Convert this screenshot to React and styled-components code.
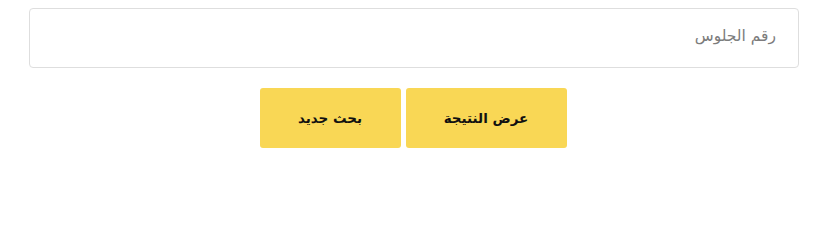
import React from "react";
import styled, { createGlobalStyle } from "styled-components";

const Global = createGlobalStyle`
  html, body { margin: 0; padding: 0; background: #fff; }
  body { font-family: "DejaVu Sans", "Noto Sans", sans-serif; }
  * { box-sizing: border-box; }
`;

const Wrapper = styled.div`
  direction: rtl;
  padding: 8px 14px 0 29px;
  display: flex;
  flex-direction: column;
  gap: 20px;
`;

const Input = styled.input`
  width: 100%;
  height: 60px;
  border: 1px solid #dedede;
  border-radius: 4px;
  padding: 0 22px 4px;
  font-family: "DejaVu Sans", sans-serif;
  font-size: 15.5px;
  color: #333;
  direction: rtl;
  outline: none;
  &::placeholder { color: #7c7c7c; }
`;

const Actions = styled.div`
  display: flex;
  justify-content: center;
  gap: 5px;
  padding-right: 2px;
`;

const Button = styled.button`
  width: ${(p) => p.$w}px;
  height: 60px;
  background: #f9d755;
  border: none;
  border-radius: 3px;
  font-family: "DejaVu Sans", sans-serif;
  font-weight: bold;
  font-size: 13.5px;
  color: #111;
  cursor: pointer;
`;

export default function App() {
  return (
    <>
      <Global />
      <Wrapper>
        <Input placeholder="رقم الجلوس" />
        <Actions>
          <Button $w={161}>عرض النتيجة</Button>
          <Button $w={141}>بحث جديد</Button>
        </Actions>
      </Wrapper>
    </>
  );
}
